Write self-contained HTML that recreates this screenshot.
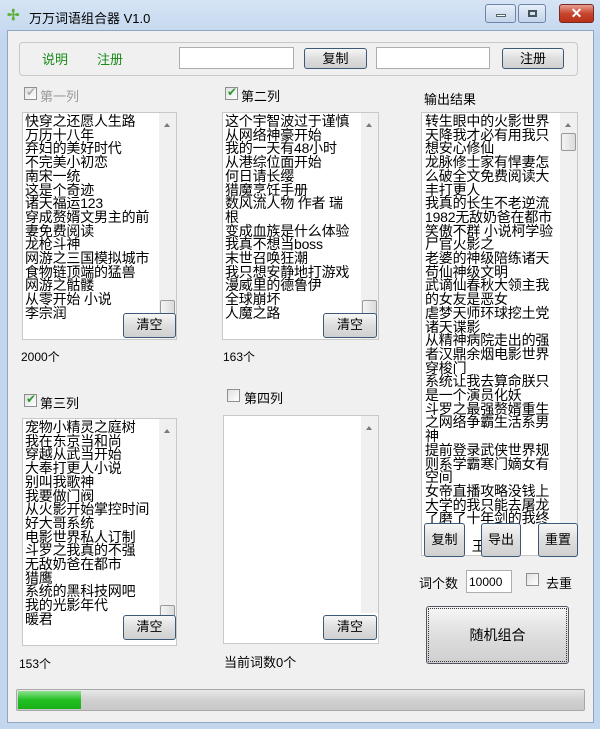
<!DOCTYPE html>
<html><head><meta charset="utf-8"><style>
*{margin:0;padding:0;box-sizing:border-box}
body{width:600px;height:729px;overflow:hidden;background:linear-gradient(#d6e4f5,#c2d6ee 40px);font-family:"Liberation Sans","Noto Sans CJK SC","WenQuanYi Zen Hei",sans-serif;font-size:12px;color:#000;position:relative}
.a{position:absolute}
.client{left:7px;top:30px;width:587px;height:693px;background:#f0f0f0;border:1px solid #8ea6c4}
.tb{border:1px solid #abadb3;background:#fff}
.btn{border:1px solid #3c5a78;border-radius:3px;background:linear-gradient(#f6f6f6,#dedede 50%,#d0d0d0);text-align:center;font-size:13px;line-height:22px}
.list{border:1px solid #c8c8c8;background:#fff;overflow:hidden}
.list .t{position:absolute;left:2px;top:2px;font-size:14px;line-height:13.7px;letter-spacing:-0.2px;white-space:pre}
.sb{position:absolute;right:0;top:0;width:17px;bottom:0;background:#f0f0f0}
.sb:before{content:"";position:absolute;left:5px;top:10px;border:3px solid transparent;border-bottom:4px solid #7a7a7a;border-top:0}
.thumb{position:absolute;left:1px;width:15px;height:18px;border:1px solid #9a9a9a;border-radius:2px;background:linear-gradient(90deg,#f4f4f4,#dcdcdc)}
.cb{width:13px;height:13px;border:1px solid #8f8f8f;background:linear-gradient(135deg,#e0e0e0,#fff)}
.cb.k:after{content:"✔";position:absolute;left:1px;top:-3px;color:#2a9a2a;font-size:12px}
.cb.g:after{content:"✔";position:absolute;left:1px;top:-3px;color:#b0b0b0;font-size:12px}
</style></head><body>
<div class="a" style="left:7px;top:6px;color:#60b040;font-size:15px;font-weight:bold">✢</div>
<div class="a" style="left:29px;top:8px;font-size:13px">万万词语组合器 V1.0</div>
<div class="a" style="left:485px;top:4px;width:31px;height:19px;border:1px solid #6d85a6;border-radius:3px;background:linear-gradient(#e6eef8,#c4d4ea)"><div class="a" style="left:10px;top:9px;width:10px;height:3px;background:#fff;border:1px solid #566"></div></div>
<div class="a" style="left:518px;top:4px;width:28px;height:19px;border:1px solid #6d85a6;border-radius:3px;background:linear-gradient(#e6eef8,#c4d4ea)"><div class="a" style="left:9px;top:5px;width:9px;height:7px;border:2px solid #455"></div></div>
<div class="a" style="left:559px;top:4px;width:35px;height:19px;border:1px solid #7a2a20;border-radius:3px;background:linear-gradient(#e8a090,#c8452e 50%,#b83018);color:#fff;font-weight:bold;text-align:center;line-height:17px;font-size:14px">✕</div>

<div class="a client"></div>
<div class="a" style="left:19px;top:42px;width:559px;height:34px;border:1px solid #c8c8c8;border-radius:4px"></div>
<div class="a" style="left:42px;top:49px;color:#1a8a1a;font-size:13px">说明</div>
<div class="a" style="left:97px;top:49px;color:#1a8a1a;font-size:13px">注册</div>
<div class="a tb" style="left:179px;top:47px;width:115px;height:22px"></div>
<div class="a btn" style="left:304px;top:48px;width:63px;height:21px;line-height:19px">复制</div>
<div class="a tb" style="left:376px;top:47px;width:114px;height:22px"></div>
<div class="a btn" style="left:502px;top:48px;width:62px;height:21px;line-height:19px">注册</div>

<div class="a cb g" style="left:24px;top:87px"></div>
<div class="a" style="left:40px;top:86px;color:#999;font-size:13px">第一列</div>
<div class="a cb k" style="left:225px;top:87px"></div>
<div class="a" style="left:241px;top:86px;font-size:13px">第二列</div>
<div class="a" style="left:424px;top:89px;font-size:13px">输出结果</div>

<div class="a list" style="left:22px;top:112px;width:155px;height:228px"><div class="t">快穿之还愿人生路
万历十八年
弃妇的美好时代
不完美小初恋
南宋一统
这是个奇迹
诸天福运123
穿成赘婿文男主的前
妻免费阅读
龙枪斗神
网游之三国模拟城市
食物链顶端的猛兽
网游之骷髅
从零开始 小说
李宗润</div><div class="sb"><div class="thumb" style="top:187px"></div></div></div>
<div class="a btn" style="left:123px;top:313px;width:53px;height:25px">清空</div>
<div class="a" style="left:21px;top:348px">2000个</div>

<div class="a list" style="left:222px;top:112px;width:157px;height:228px"><div class="t">这个宇智波过于谨慎
从网络神豪开始
我的一天有48小时
从港综位面开始
何日请长缨
猎魔烹饪手册
数风流人物 作者 瑞
根
变成血族是什么体验
我真不想当boss
末世召唤狂潮
我只想安静地打游戏
漫威里的德鲁伊
全球崩坏
人魔之路</div><div class="sb"><div class="thumb" style="top:187px"></div></div></div>
<div class="a btn" style="left:323px;top:313px;width:54px;height:25px">清空</div>
<div class="a" style="left:223px;top:348px">163个</div>

<div class="a cb k" style="left:24px;top:394px"></div>
<div class="a" style="left:40px;top:393px;font-size:13px">第三列</div>
<div class="a cb" style="left:227px;top:389px"></div>
<div class="a" style="left:244px;top:388px;font-size:13px">第四列</div>

<div class="a list" style="left:22px;top:418px;width:155px;height:228px"><div class="t">宠物小精灵之庭树
我在东京当和尚
穿越从武当开始
大奉打更人小说
别叫我歌神
我要做门阀
从火影开始掌控时间
好大哥系统
电影世界私人订制
斗罗之我真的不强
无敌奶爸在都市
猎鹰
系统的黑科技网吧
我的光影年代
暖君</div><div class="sb" style="bottom:25px"><div class="thumb" style="top:186px"></div></div></div>
<div class="a btn" style="left:123px;top:615px;width:53px;height:25px">清空</div>
<div class="a" style="left:19px;top:655px">153个</div>

<div class="a list" style="left:223px;top:415px;width:156px;height:229px"><div class="sb" style="bottom:30px"></div></div>
<div class="a btn" style="left:323px;top:615px;width:54px;height:25px">清空</div>
<div class="a" style="left:224px;top:652px;font-size:13px">当前词数0个</div>

<div class="a list" style="left:421px;top:112px;width:157px;height:444px"><div class="t" style="left:3px">转生眼中的火影世界
天降我才必有用我只
想安心修仙
龙脉修士家有悍妻怎
么破全文免费阅读大
丰打更人
我真的长生不老逆流
1982无敌奶爸在都市
笑傲不群 小说柯学验
尸官火影之
老婆的神级陪练诸天
苟仙神级文明
武谪仙春秋大领主我
的女友是恶女
虐梦天师环球挖土党
诸天谍影
从精神病院走出的强
者汉鼎余烟电影世界
穿梭门
系统让我去算命朕只
是一个演员化妖
斗罗之最强赘婿重生
之网络争霸生活系男
神
提前登录武侠世界规
则系学霸寒门嫡女有
空间
女帝直播攻略没钱上
大学的我只能去屠龙
了磨了十年剑的我终
    浪
    ss     王</div><div class="sb"><div class="thumb" style="top:20px"></div></div></div>
<div class="a btn" style="left:424px;top:523px;width:41px;height:34px;line-height:32px">复制</div>
<div class="a btn" style="left:481px;top:523px;width:40px;height:34px;line-height:32px">导出</div>
<div class="a btn" style="left:538px;top:523px;width:40px;height:34px;line-height:32px">重置</div>

<div class="a" style="left:419px;top:573px;font-size:13px">词个数</div>
<div class="a tb" style="left:466px;top:570px;width:46px;height:23px;padding:4px 2px;font-size:12px">10000</div>
<div class="a cb" style="left:526px;top:573px"></div>
<div class="a" style="left:546px;top:573px;font-size:13px">去重</div>
<div class="a btn" style="left:426px;top:606px;width:143px;height:58px;line-height:56px;border-color:#556;font-size:14px;outline:1px dotted #333;outline-offset:-3px">随机组合</div>

<div class="a" style="left:16px;top:689px;width:569px;height:22px;border:1px solid #a8a8a8;border-radius:2px;background:linear-gradient(#e8e8e8,#d0d0d0 50%,#c8c8c8)"><div class="a" style="left:1px;top:1px;width:63px;height:18px;background:linear-gradient(#8ee08e,#22c022 50%,#18b018)"></div></div>
</body></html>
